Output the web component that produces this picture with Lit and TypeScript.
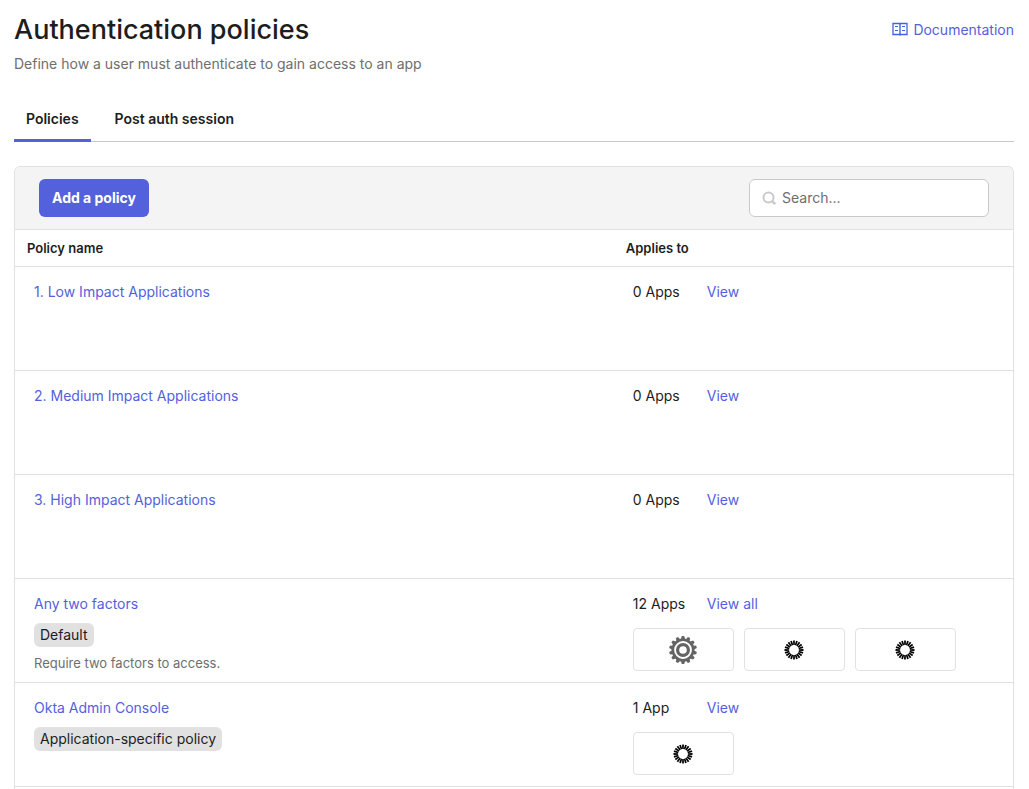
import { LitElement, html, svg, css, nothing } from "lit";
import { customElement, property, state } from "lit/decorators.js";

type AppIcon = "gear" | "burst";

interface Policy {
  name: string;
  badge?: string;
  description?: string;
  count: string;
  action: string;
  apps: AppIcon[];
}

const POLICIES: Policy[] = [
  { name: "1. Low Impact Applications", count: "0 Apps", action: "View", apps: [] },
  { name: "2. Medium Impact Applications", count: "0 Apps", action: "View", apps: [] },
  { name: "3. High Impact Applications", count: "0 Apps", action: "View", apps: [] },
  {
    name: "Any two factors",
    badge: "Default",
    description: "Require two factors to access.",
    count: "12 Apps",
    action: "View all",
    apps: ["gear", "burst", "burst"],
  },
  {
    name: "Okta Admin Console",
    badge: "Application-specific policy",
    count: "1 App",
    action: "View",
    apps: ["burst"],
  },
];

const steps = (n: number) => Array.from({ length: n }, (_, i) => (i * 360) / n);

@customElement("app-tile")
export class AppTile extends LitElement {
  @property() icon: AppIcon = "burst";

  static styles = css`
    :host {
      display: flex;
      align-items: center;
      justify-content: center;
      box-sizing: border-box;
      width: 101px;
      height: 43px;
      border: 1px solid #e1e1e1;
      border-radius: 4px;
      background: #fff;
    }
    svg {
      display: block;
    }
  `;

  render() {
    return this.icon === "gear"
      ? html`<svg width="28" height="28" viewBox="-14 -14 28 28" aria-hidden="true">
          <circle r="10.2" fill="none" stroke="#646464" stroke-width="2.6" />
          <circle r="5.4" fill="none" stroke="#646464" stroke-width="3.2" />
          ${steps(14).map(
            (a) => svg`<path d="M-2.1 -11L-1.2 -13.9H1.2L2.1 -11Z" fill="#646464" transform="rotate(${a})" />`
          )}
        </svg>`
      : html`<svg width="20" height="20" viewBox="-10 -10 20 20" aria-hidden="true">
          ${steps(20).map(
            (a) => svg`<path d="M-0.8 -4.9L-0.9 -9.5H0.9L0.8 -4.9Z" fill="#000" transform="rotate(${a})" />`
          )}
        </svg>`;
  }
}

@customElement("app-root")
export class AppRoot extends LitElement {
  @state() private tab = 0;

  static styles = css`
    :host {
      display: flex;
      flex-direction: column;
      box-sizing: border-box;
      min-height: 100vh;
      padding: 14px 15px 0 14px;
      background: #fff;
      color: #1d1d21;
      font: 14px/20px Inter, "Liberation Sans", sans-serif;
    }
    a {
      color: #5461dc;
      text-decoration: none;
    }
    header {
      display: flex;
      justify-content: space-between;
      align-items: flex-start;
    }
    h1 {
      margin: 0;
      font-size: 27px;
      line-height: 32px;
      font-weight: 500;
    }
    .lead {
      margin: 8px 0 0;
      color: #6e6e6e;
    }
    .docs {
      display: flex;
      align-items: center;
      gap: 5px;
      padding-top: 6px;
    }
    .tabs {
      display: flex;
      gap: 12px;
      margin-top: 23px;
      border-bottom: 1px solid #c9c9c9;
    }
    .tab {
      margin-bottom: -1px;
      padding: 12px 12px 10px;
      border: 0;
      border-bottom: 3px solid transparent;
      background: none;
      color: inherit;
      font: inherit;
      font-weight: 600;
      cursor: pointer;
    }
    .tab.on {
      border-bottom-color: #5461dc;
    }
    .panel {
      flex: 1;
      margin-top: 24px;
      border: 1px solid #e1e1e1;
      border-bottom: 0;
      border-radius: 6px 6px 0 0;
      overflow: hidden;
    }
    .toolbar {
      display: flex;
      justify-content: space-between;
      padding: 12px 24px;
      background: #f4f4f4;
      border-bottom: 1px solid #e1e1e1;
    }
    .add {
      height: 38px;
      padding: 0 13px;
      border: 0;
      border-radius: 6px;
      background: #5461dc;
      color: #fff;
      font: inherit;
      font-weight: 700;
      cursor: pointer;
    }
    .search {
      display: flex;
      align-items: center;
      gap: 6px;
      box-sizing: border-box;
      width: 240px;
      height: 38px;
      padding: 0 12px;
      border: 1px solid #c9c9c9;
      border-radius: 6px;
      background: #fff;
    }
    .search input {
      flex: 1;
      min-width: 0;
      padding: 0;
      border: 0;
      outline: 0;
      background: none;
      color: inherit;
      font: inherit;
    }
    .search input::placeholder {
      color: #6e6e6e;
      opacity: 1;
    }
    table {
      width: 100%;
      table-layout: fixed;
      border-collapse: separate;
      border-spacing: 0;
    }
    th,
    td {
      box-sizing: border-box;
      border-bottom: 1px solid #e1e1e1;
      text-align: left;
      vertical-align: top;
    }
    th {
      padding: 8px 12px;
      font-size: 13px;
      font-weight: 600;
    }
    .name-col {
      width: 60%;
    }
    td {
      height: 104px;
      padding: 15px 19px 0;
    }
    .badge {
      display: block;
      width: fit-content;
      margin-top: 9px;
      padding: 2px 6px;
      border-radius: 6px;
      background: #e1e1e1;
    }
    .desc {
      margin: 6px 0 0;
      color: #6e6e6e;
      font-size: 13px;
    }
    .counts {
      display: grid;
      grid-template-columns: 74px 1fr;
    }
    .tiles {
      display: flex;
      gap: 10px;
      margin-top: 14px;
    }
  `;

  render() {
    return html`
      <header>
        <div>
          <h1>Authentication policies</h1>
          <p class="lead">Define how a user must authenticate to gain access to an app</p>
        </div>
        <a class="docs" href="#documentation">
          <svg width="16" height="16" viewBox="0 0 16 16" fill="none" stroke="#3f63d8" aria-hidden="true">
            <path d="M1 1.5H15V12.5H1Z" stroke-width="1.3" />
            <path d="M8 1.5V13.5" stroke-width="1.4" />
            <path d="M3 4.5H6M3 8.5H6M10 4.5H13M10 8.5H13" />
          </svg>
          Documentation
        </a>
      </header>
      <div class="tabs" role="tablist">
        ${["Policies", "Post auth session"].map(
          (label, i) => html`<button
            class="tab ${i === this.tab ? "on" : ""}"
            role="tab"
            aria-selected=${i === this.tab ? "true" : "false"}
            @click=${() => (this.tab = i)}
          >${label}</button>`
        )}
      </div>
      <section class="panel">
        <div class="toolbar">
          <button class="add">Add a policy</button>
          <label class="search">
            <svg width="14" height="14" viewBox="0 0 14 14" fill="none" stroke="#c9c9c9" stroke-width="2" aria-hidden="true">
              <circle cx="6.5" cy="6.5" r="5" />
              <path d="M10 10L13.2 13.2" stroke-width="2.4" />
            </svg>
            <input type="text" placeholder="Search..." aria-label="Search policies" />
          </label>
        </div>
        <table>
          <thead>
            <tr>
              <th class="name-col" scope="col">Policy name</th>
              <th scope="col">Applies to</th>
            </tr>
          </thead>
          <tbody>
            ${POLICIES.map(
              (p) => html`<tr>
                <td>
                  <a href="#policy">${p.name}</a>
                  ${p.badge ? html`<span class="badge">${p.badge}</span>` : nothing}
                  ${p.description ? html`<p class="desc">${p.description}</p>` : nothing}
                </td>
                <td>
                  <div class="counts">
                    <span>${p.count}</span>
                    <span><a href="#apps">${p.action}</a></span>
                  </div>
                  ${p.apps.length
                    ? html`<div class="tiles">
                        ${p.apps.map((icon) => html`<app-tile icon=${icon}></app-tile>`)}
                      </div>`
                    : nothing}
                </td>
              </tr>`
            )}
          </tbody>
        </table>
      </section>
    `;
  }
}
